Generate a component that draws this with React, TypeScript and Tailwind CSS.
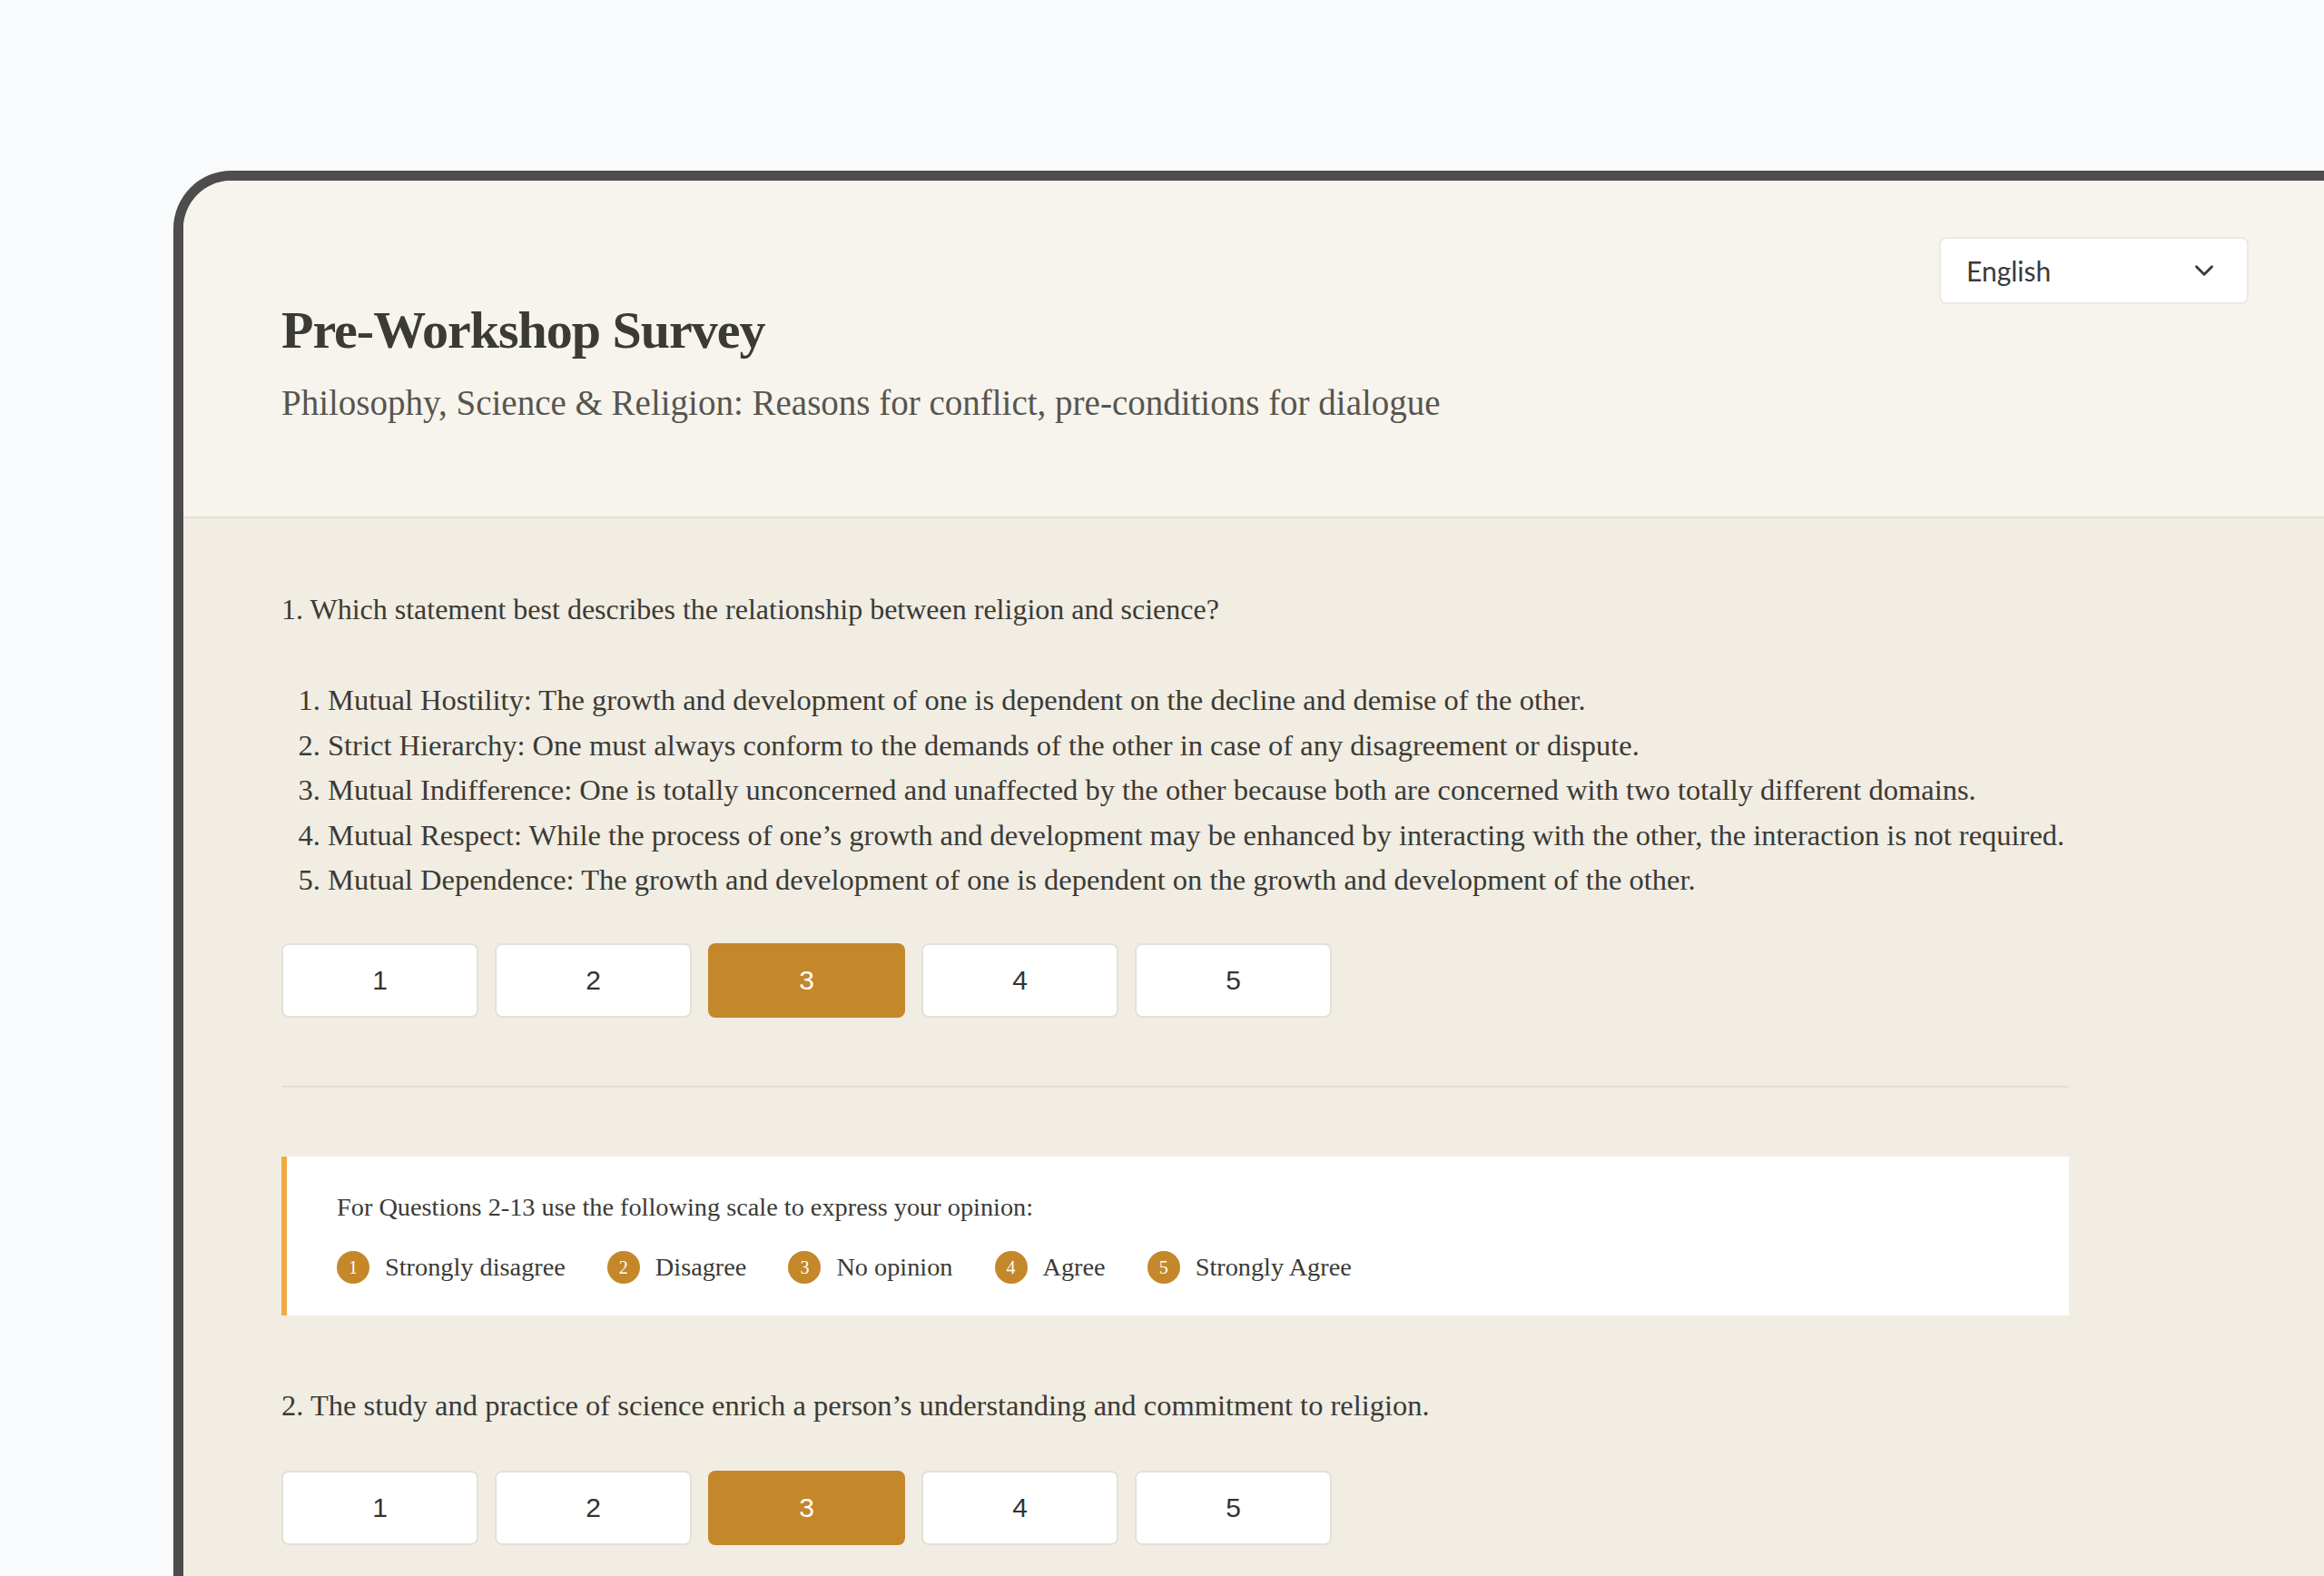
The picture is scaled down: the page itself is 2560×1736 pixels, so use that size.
import React, { useState } from 'react';
import { ChevronDown } from 'lucide-react';

const serif = { fontFamily: '"Liberation Serif", "DejaVu Serif", serif' };

const options = [
  'Mutual Hostility: The growth and development of one is dependent on the decline and demise of the other.',
  'Strict Hierarchy: One must always conform to the demands of the other in case of any disagreement or dispute.',
  'Mutual Indifference: One is totally unconcerned and unaffected by the other because both are concerned with two totally different domains.',
  'Mutual Respect: While the process of one\u2019s growth and development may be enhanced by interacting with the other, the interaction is not required.',
  'Mutual Dependence: The growth and development of one is dependent on the growth and development of the other.',
];

const scale = ['Strongly disagree', 'Disagree', 'No opinion', 'Agree', 'Strongly Agree'];

const ScaleButtons = ({ value, onChange }: { value: number; onChange: (v: number) => void }) => (
  <div className="flex gap-[18px]">
    {[1, 2, 3, 4, 5].map((n) => (
      <button
        key={n}
        onClick={() => onChange(n)}
        className={
          n === value
            ? 'w-[217px] h-[82px] rounded-[8px] bg-[#c4872a] text-white text-[30px] font-["Liberation_Sans",sans-serif]'
            : 'w-[217px] h-[82px] rounded-[8px] bg-white border-2 border-[#e4e1da] text-[#333333] text-[30px] font-["Liberation_Sans",sans-serif]'
        }
      >
        {n}
      </button>
    ))}
  </div>
);

export default function App() {
  const [q1, setQ1] = useState(3);
  const [q2, setQ2] = useState(3);

  return (
    <div className="h-[1736px] bg-[#f9fafc] pt-[188px] pl-[191px] overflow-hidden">
      <div className="h-full border-l-[11px] border-t-[11px] border-[#4d4d4d] rounded-tl-[64px] bg-[#f1ede3] overflow-hidden text-[#3b3a35]" style={serif}>
        {/* Header */}
        <header className="h-[372px] bg-[#f7f4ed] border-b-2 border-[#e6e2da] flex justify-between pl-[108px] pr-[83px]">
          <div className="pt-[133px]">
            <h1 className="text-[58px] leading-[64px] font-bold text-[#3a3a36] tracking-[-1px]">Pre-Workshop Survey</h1>
            <p className="mt-[25px] text-[39px] leading-[46px] text-[#57554f]">
              Philosophy, Science &amp; Religion: Reasons for conflict, pre-conditions for dialogue
            </p>
          </div>
          <div className="pt-[62px]">
            <button className="w-[341px] h-[74px] bg-white border-2 border-[#ede9e2] rounded-[8px] flex items-center justify-between pl-[28px] pr-[30px] text-[30px] text-[#3a3a3a] font-['Lato',sans-serif]">
              English
              <ChevronDown size={34} strokeWidth={2} className="text-[#3a3a3a]" />
            </button>
          </div>
        </header>

        {/* Questions */}
        <main className="pl-[108px] w-[2077px] pt-[80px]">
          <p className="text-[32px] leading-[40px]">1. Which statement best describes the relationship between religion and science?</p>
          <ol className="mt-[56px] list-decimal pl-[51px] text-[32.5px] leading-[49.5px]">
            {options.map((o) => (
              <li key={o}>{o}</li>
            ))}
          </ol>
          <div className="mt-[44px]">
            <ScaleButtons value={q1} onChange={setQ1} />
          </div>

          <div className="mt-[75px] h-[2px] bg-[#e3dfd6]" />

          <section className="mt-[76px] h-[175px] bg-white border-l-[6px] border-[#f0ab45] pl-[55px] pt-[38px]">
            <p className="text-[28.3px] leading-[36px]">For Questions 2-13 use the following scale to express your opinion:</p>
            <div className="mt-[30px] flex items-center gap-[46px]">
              {scale.map((s, i) => (
                <div key={s} className="flex items-center gap-[17px]">
                  <span className="w-[36px] h-[36px] rounded-full bg-[#c4872a] text-white text-[20px] flex items-center justify-center">
                    {i + 1}
                  </span>
                  <span className="text-[28.3px] leading-[36px]">{s}</span>
                </div>
              ))}
            </div>
          </section>

          <p className="mt-[79px] text-[32.5px] leading-[40px]">2. The study and practice of science enrich a person&rsquo;s understanding and commitment to religion.</p>
          <div className="mt-[52px]">
            <ScaleButtons value={q2} onChange={setQ2} />
          </div>
        </main>
      </div>
    </div>
  );
}
